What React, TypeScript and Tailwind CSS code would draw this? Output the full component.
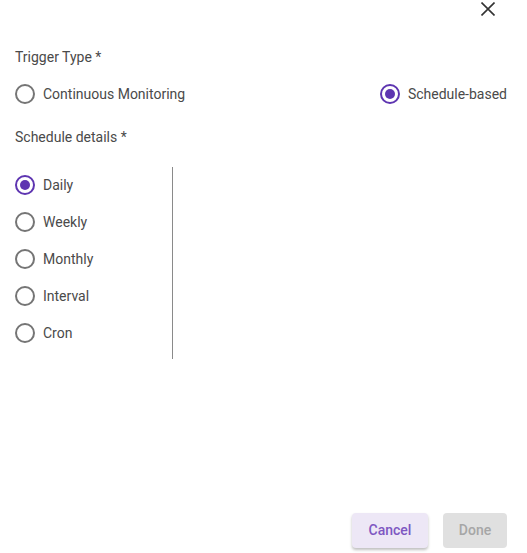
import { FC } from 'react';

interface RadioProps {
  label: string;
  checked?: boolean;
}

const Radio: FC<RadioProps> = ({ label, checked }) => (
  <label className="flex items-center gap-[8px] cursor-pointer">
    <span
      className={`flex h-[20px] w-[20px] items-center justify-center rounded-full border-2 ${
        checked ? 'border-[#5e35b1]' : 'border-[#757575]'
      }`}
    >
      {checked && <span className="h-[10px] w-[10px] rounded-full bg-[#5e35b1]" />}
    </span>
    <span className="text-[14px] leading-[20px] text-[#4a4a4a]">{label}</span>
  </label>
);

const schedules = ['Daily', 'Weekly', 'Monthly', 'Interval', 'Cron'];

export default function App() {
  return (
    <div
      className="flex h-[553px] w-[527px] flex-col bg-white"
      style={{ fontFamily: 'Roboto, "Liberation Sans", sans-serif' }}
    >
      {/* close */}
      <div className="flex h-[18px] justify-end pr-[32px] pt-[2px]">
        <svg width="14" height="14" viewBox="0 0 14 14" className="text-[#333]">
          <path d="M0.5 0.5L13.5 13.5M13.5 0.5L0.5 13.5" stroke="currentColor" strokeWidth="1.6" />
        </svg>
      </div>

      <div className="mt-[29px] pl-[15px] text-[14px] leading-[20px] text-[#4a4a4a]">Trigger Type *</div>

      <div className="mt-[17px] flex items-center justify-between pl-[15px] pr-[20px]">
        <Radio label="Continuous Monitoring" />
        <Radio label="Schedule-based" checked />
      </div>

      <div className="mt-[23px] pl-[15px] text-[14px] leading-[20px] text-[#4a4a4a]">Schedule details *</div>

      <div className="mt-[19px] flex pl-[15px]">
        <div className="flex w-[157px] flex-col">
          {schedules.map((s, i) => (
            <div key={s} className="flex h-[37px] items-center">
              <Radio label={s} checked={i === 0} />
            </div>
          ))}
        </div>
        <div className="mt-[1px] h-[192px] border-l border-[#8a8a8a]" />
      </div>

      {/* actions */}
      <div className="mt-auto flex justify-end gap-[15px] pb-[5px] pr-[20px]">
        <button className="h-[35px] w-[76px] rounded-[4px] bg-[#ede7f6] text-[14px] font-medium text-[#7e57c2] shadow-[0_2px_3px_rgba(0,0,0,0.25)]">
          Cancel
        </button>
        <button className="h-[35px] w-[64px] rounded-[4px] bg-[#e0e0e0] text-[14px] font-medium text-[#a6a6a6]" disabled>
          Done
        </button>
      </div>
    </div>
  );
}
